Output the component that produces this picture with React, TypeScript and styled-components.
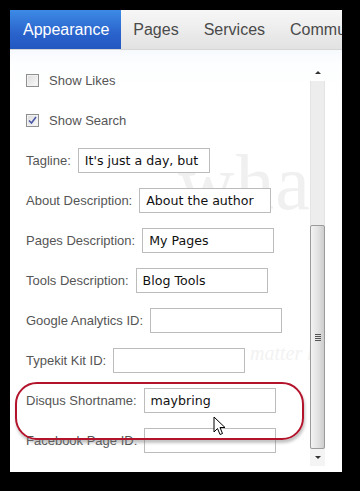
import React from 'react';
import styled, { createGlobalStyle } from 'styled-components';

const Global = createGlobalStyle`
	html, body {
		margin: 0;
		padding: 0;
		background: #000;
	}
	body {
		width: 360px;
		height: 491px;
		overflow: hidden;
		font-family: 'Liberation Sans', Arial, sans-serif;
	}
`;

const Panel = styled.div`
	margin: 10px 0 0 10px;
	width: 332px;
	height: 462px;
	background: #fff;
	display: flex;
	flex-direction: column;
	overflow: hidden;
`;

const TabBar = styled.div`
	display: flex;
	height: 39px;
	flex-shrink: 0;
	background: linear-gradient(#f7f7f7, #e2e2e2);
	border-bottom: 1px solid #d6d6d6;
	white-space: nowrap;
	overflow: hidden;
`;

const Tab = styled.div<{ $active?: boolean }>`
	display: flex;
	align-items: center;
	padding: 0 12px 0 ${(p) => (p.$active ? '13px' : '12px')};
	font-size: 16px;
	color: ${(p) => (p.$active ? '#fff' : '#4a4a4a')};
	background: ${(p) =>
		p.$active ? 'linear-gradient(#3d8be6, #2a63cc 60%, #2257c0)' : 'transparent'};
	margin-right: ${(p) => (p.$active ? '0' : '1px')};
`;

const Body = styled.div`
	flex: 1;
	display: flex;
	background: linear-gradient(#f6f9fd, #fdfeff 14px, #fff 40px);
`;

const Content = styled.div`
	position: relative;
	flex: 1;
	padding: 10px 0 0 16px;
	overflow: hidden;
`;

const Watermark = styled.div`
	position: absolute;
	left: 168px;
	top: 88px;
	font-family: 'Liberation Serif', serif;
	font-size: 78px;
	color: #f0f0f0;
	letter-spacing: 1px;
	pointer-events: none;
`;

const Watermark2 = styled.div`
	position: absolute;
	left: 240px;
	top: 292px;
	font-family: 'Liberation Serif', serif;
	font-style: italic;
	font-size: 20px;
	color: #f2f2f2;
	pointer-events: none;
	white-space: nowrap;
`;

const Row = styled.div`
	position: relative;
	display: flex;
	align-items: center;
	height: 40px;
	font-size: 13px;
	color: #555;
	white-space: nowrap;
`;

const Box = styled.span`
	display: inline-flex;
	align-items: center;
	justify-content: center;
	width: 11px;
	height: 11px;
	border: 1px solid #8e8f8f;
	background: linear-gradient(135deg, #dcdcdc, #fbfbfb);
	margin-right: 10px;
	box-shadow: inset 0 0 0 1px #f2f2f2;
`;

const Label = styled.span`
	margin-right: 7px;
`;

const Field = styled.input`
	box-sizing: border-box;
	width: 132px;
	height: 25px;
	border: 1px solid #bcbcbc;
	padding: 0 6px;
	font-family: 'DejaVu Sans', Verdana, sans-serif;
	font-size: 12.6px;
	color: #111;
	background: #fff;
	outline: none;
`;

const Highlight = styled.div`
	position: absolute;
	left: -11px;
	top: 2px;
	width: 285px;
	height: 54px;
	border: 2px solid #b3142c;
	border-radius: 22px;
	box-shadow: 1px 3px 3px rgba(120, 120, 120, 0.45);
	pointer-events: none;
	z-index: 1;
`;

const Cursor = styled.svg`
	position: absolute;
	left: 187px;
	top: 36px;
	pointer-events: none;
	z-index: 2;
`;

const ScrollCol = styled.div`
	width: 15px;
	padding: 14px 17px 6px 0;
	display: flex;
	flex-direction: column;
`;

const Arrow = styled.div<{ $down?: boolean }>`
	height: 17px;
	display: flex;
	align-items: center;
	justify-content: center;
	background: ${(p) => (p.$down ? '#f4f4f4' : 'transparent')};
	&::after {
		content: '';
		border-left: 3px solid transparent;
		border-right: 3px solid transparent;
		${(p) => (p.$down ? 'border-top: 3px solid #333;' : 'border-bottom: 3px solid #333;')}
	}
`;

const Track = styled.div`
	flex: 1;
	display: flex;
	flex-direction: column;
	background: #ededed;
	border-left: 1px solid #e4e4e4;
	border-right: 1px solid #e4e4e4;
`;

const Gap = styled.div`
	height: 144px;
`;

const Thumb = styled.div`
	flex: 1;
	margin: 0 -1px;
	border: 1px solid #9b9b9b;
	border-radius: 2px;
	background: linear-gradient(90deg, #f3f3f3, #e2e2e2 55%, #cdcdcd);
	display: flex;
	align-items: center;
	justify-content: center;
`;

const Grip = styled.div`
	width: 6px;
	height: 7px;
	background: repeating-linear-gradient(#555 0 1px, transparent 1px 2px);
`;

const fields: { label: string; value?: string }[] = [
	{ label: 'Tagline:', value: "It's just a day, but" },
	{ label: 'About Description:', value: 'About the author' },
	{ label: 'Pages Description:', value: 'My Pages' },
	{ label: 'Tools Description:', value: 'Blog Tools' },
	{ label: 'Google Analytics ID:' },
	{ label: 'Typekit Kit ID:' },
];

export default function App() {
	return (
		<>
			<Global />
			<Panel>
				<TabBar>
					<Tab $active>Appearance</Tab>
					<Tab>Pages</Tab>
					<Tab>Services</Tab>
					<Tab>Community</Tab>
				</TabBar>
				<Body>
					<Content>
						<Watermark>what</Watermark>
						<Watermark2>matter how s</Watermark2>
						<Row>
							<Box />
							Show Likes
						</Row>
						<Row>
							<Box>
								<svg width='9' height='9' viewBox='0 0 9 9'>
									<path d='M1 4.5 L3.5 7 L8 1' fill='none' stroke='#4b58a8' strokeWidth='1.6' />
								</svg>
							</Box>
							Show Search
						</Row>
						{fields.map((f) => (
							<Row key={f.label}>
								<Label>{f.label}</Label>
								<Field defaultValue={f.value ?? ''} readOnly />
							</Row>
						))}
						<Row>
							<Highlight />
							<Label>Disqus Shortname:</Label>
							<Field defaultValue='maybring' readOnly />
							<Cursor width='13' height='21' viewBox='0 0 13 21'>
								<path
									d='M1 1 L1 16 L4.5 12.5 L7 18.5 L9.5 17.5 L7 11.5 L12 11.5 Z'
									fill='#fff'
									stroke='#000'
									strokeWidth='1'
									strokeLinejoin='round'
								/>
							</Cursor>
						</Row>
						<Row>
							<Label>Facebook Page ID:</Label>
							<Field defaultValue='' readOnly />
						</Row>
					</Content>
					<ScrollCol>
						<Arrow />
						<Track>
							<Gap />
							<Thumb>
								<Grip />
							</Thumb>
						</Track>
						<Arrow $down />
					</ScrollCol>
				</Body>
			</Panel>
		</>
	);
}
